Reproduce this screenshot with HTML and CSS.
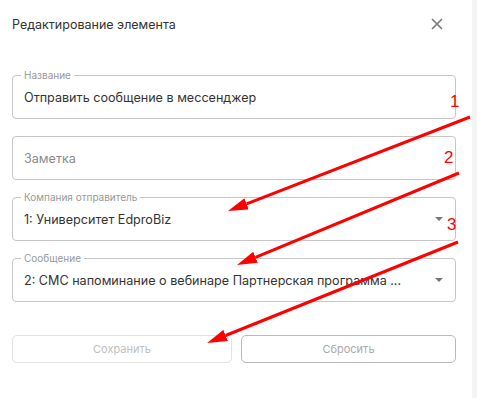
FILE: index.html
```html
<!DOCTYPE html>
<html lang="ru">
<head>
<meta charset="utf-8">
<link rel="stylesheet" href="styles.css">
</head>
<body>
<div class="page">
  <div class="dialog">
    <div class="header">
      <span class="title">Редактирование элемента</span>
      <svg class="close" width="12" height="12" viewBox="0 0 12 12"><path d="M1 1 L11 11 M11 1 L1 11" stroke="#777" stroke-width="1.6" fill="none"/></svg>
    </div>
    <div class="form">
      <div class="field">
        <span class="label">Название</span>
        <span class="value">Отправить сообщение в мессенджер</span>
      </div>
      <div class="field">
        <span class="placeholder">Заметка</span>
      </div>
      <div class="field">
        <span class="label">Компания отправитель</span>
        <span class="value">1: Университет EdproBiz</span>
        <span class="caret"></span>
      </div>
      <div class="field">
        <span class="label">Сообщение</span>
        <span class="value">2: СМС напоминание о вебинаре Партнерская программа ...</span>
        <span class="caret"></span>
      </div>
      <div class="buttons">
        <button class="btn btn-disabled">Сохранить</button>
        <button class="btn">Сбросить</button>
      </div>
    </div>
  </div>
  <div class="strip"></div>
</div>
<svg class="overlay" width="477" height="398" viewBox="0 0 477 398">
  <defs>
    <marker id="ah" markerWidth="20" markerHeight="12" refX="0" refY="6" orient="auto" markerUnits="userSpaceOnUse">
      <path d="M0,0 L20,6 L0,12 z" fill="#ff0000"/>
    </marker>
  </defs>
  <line x1="470" y1="117" x2="246.6" y2="203.8" stroke="#ff0000" stroke-width="3" marker-end="url(#ah)"/>
  <line x1="459" y1="173" x2="255.5" y2="257.3" stroke="#ff0000" stroke-width="3" marker-end="url(#ah)"/>
  <line x1="458" y1="242" x2="225.6" y2="335.5" stroke="#ff0000" stroke-width="3" marker-end="url(#ah)"/>
  <text x="450" y="107" class="num">1</text>
  <text x="444" y="163" class="num">2</text>
  <text x="447" y="230" class="num">3</text>
</svg>
</body>
</html>
```

FILE: styles.css
```css
html, body {
  margin: 0;
  padding: 0;
  background: #fff;
}
body {
  font-family: Inter, "Noto Sans", sans-serif;
  color: #333;
  position: relative;
  width: 477px;
  height: 398px;
  overflow: hidden;
}
.page {
  display: flex;
  height: 398px;
}
.dialog {
  width: 444px;
  padding: 0 16px 0 12px;
}
.strip {
  width: 5px;
  background: #f4f4f4;
}
.header {
  height: 48px;
  display: flex;
  align-items: center;
  justify-content: space-between;
  padding-right: 13px;
}
.title {
  font-size: 12.5px;
  color: #333;
}
.close {
  display: block;
}
.form {
  padding-top: 27px;
  display: flex;
  flex-direction: column;
  gap: 17px;
}
.field {
  position: relative;
  height: 44px;
  box-sizing: border-box;
  border: 1px solid #c6c6c6;
  border-radius: 4px;
  display: flex;
  align-items: center;
  padding: 0 11px;
}
.label {
  position: absolute;
  top: -7px;
  left: 8px;
  padding: 0 3px;
  background: #fff;
  font-size: 10px;
  line-height: 12px;
  color: #999;
}
.value {
  font-size: 12.6px;
  color: #333;
}
.placeholder {
  font-size: 12.6px;
  color: #8a8a8a;
}
.caret {
  position: absolute;
  right: 12px;
  top: 19px;
  width: 0;
  height: 0;
  border-left: 4px solid transparent;
  border-right: 4px solid transparent;
  border-top: 4px solid #777;
}
.buttons {
  margin-top: 16px;
  display: grid;
  grid-template-columns: 220px 1fr;
  gap: 9px;
}
.btn {
  height: 28px;
  background: #fff;
  border: 1px solid #b9b9b9;
  border-radius: 5px;
  font-family: Inter, "Noto Sans", sans-serif;
  font-size: 11px;
  color: #aaa;
  padding: 0;
}
.btn-disabled {
  border-color: #e2e2e2;
  color: #c0c0c0;
}
.overlay {
  position: absolute;
  left: 0;
  top: 0;
  pointer-events: none;
}
.num {
  font-family: "Liberation Sans", Arial, sans-serif;
  font-size: 17px;
  fill: #ff0000;
}
```
